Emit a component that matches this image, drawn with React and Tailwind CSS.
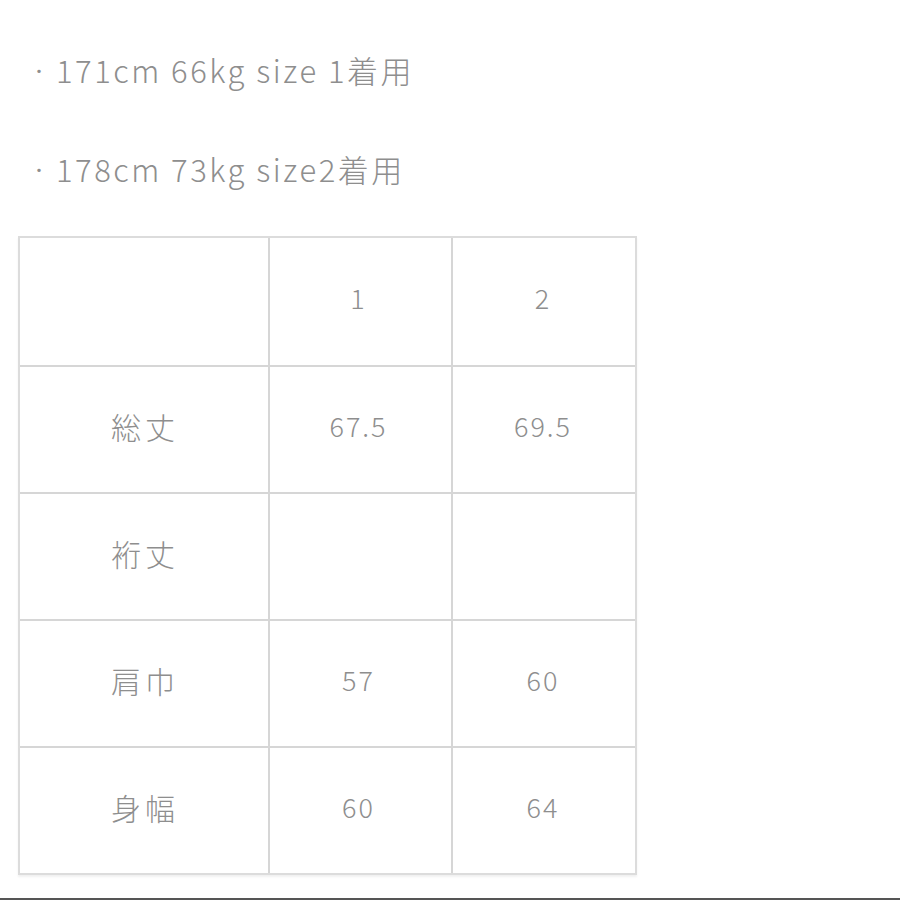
const rows = [
  { label: "", a: "1", b: "2" },
  { label: "総丈", a: "67.5", b: "69.5" },
  { label: "裄丈", a: "", b: "" },
  { label: "肩巾", a: "57", b: "60" },
  { label: "身幅", a: "60", b: "64" },
];

export default function App() {
  return (
    <div
      className="w-[900px] h-[900px] bg-white relative overflow-hidden text-[#8e8e8e] font-light"
      style={{ fontFamily: '"Noto Sans CJK JP", "Noto Sans", sans-serif' }}
    >
      <div className="pt-[48px] pl-[30px]">
        <div className="flex items-center h-[44px] text-[31px] tracking-[2.5px]">
          <span className="w-[26px] text-[18px]">・</span>
          <span>171cm 66kg size 1着用</span>
        </div>
        <div className="flex items-center h-[44px] mt-[55px] text-[31px] tracking-[2.5px]">
          <span className="w-[26px] text-[18px]">・</span>
          <span>178cm 73kg size2着用</span>
        </div>
      </div>

      <div className="mt-[45px] ml-[18px] w-[619px] border-2 border-[#dcdcdc] shadow-[0_2px_2px_rgba(0,0,0,0.06)]">
        {rows.map((r, i) => (
          <div
            key={i}
            className={`grid grid-cols-[248px_183px_184px] h-[127px] ${
              i > 0 ? "border-t-2 border-[#d6d6d6]" : ""
            }`}
          >
            <div className="flex items-center justify-center pb-[6px] text-[30px] tracking-[4px] pl-[2px]">{r.label}</div>
            <div className="flex items-center justify-center pb-[6px] border-l-2 border-[#d6d6d6] text-[27px] tracking-[2px] pr-[4px]">{r.a}</div>
            <div className="flex items-center justify-center pb-[6px] border-l-2 border-[#d6d6d6] text-[27px] tracking-[2px] pr-[2px]">{r.b}</div>
          </div>
        ))}
      </div>

      <div className="absolute left-0 right-0 bottom-0 h-[2px] bg-[#555]" />
    </div>
  );
}
